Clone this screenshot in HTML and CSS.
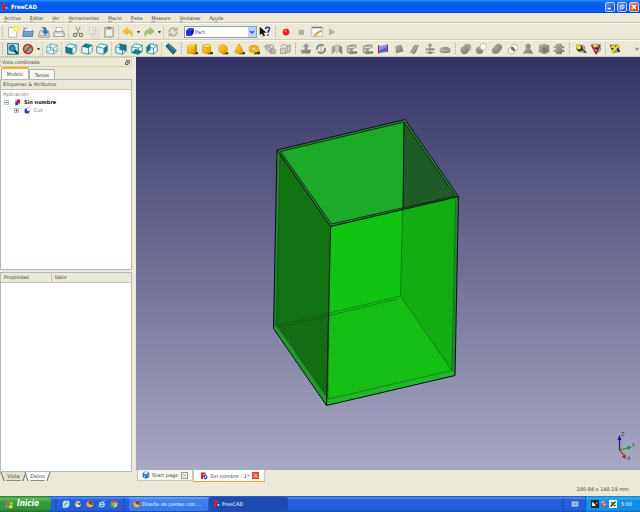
FILE: index.html
```html
<!DOCTYPE html>
<html lang="es">
<head>
<meta charset="utf-8">
<title>FreeCAD</title>
<link rel="stylesheet" href="styles.css">
</head>
<body>
<svg class="defs" aria-hidden="true">
  <defs>
    <linearGradient id="gold" x1="0" x2="1" y1="0" y2="1"><stop offset="0" stop-color="#ffdc30"/><stop offset="1" stop-color="#e89000"/></linearGradient>
    <linearGradient id="steel" x1="0" x2="1" y1="0" y2="1"><stop offset="0" stop-color="#b4b4aa"/><stop offset="1" stop-color="#74746c"/></linearGradient>
  </defs>
  <symbol id="freecad" viewBox="0 0 16 16"><path fill="#d8201c" d="M2 1h9v4H6v2h3v3H6v4H2z"/><path fill="#2848b0" d="M10 5l2 1 2 1 1 3-1 3-3 2-3-2-1-3 1-3z"/><circle cx="11" cy="10" r="1.8" fill="#cfe0ff"/></symbol>
  <symbol id="new" viewBox="0 0 16 16"><path fill="#fafafa" stroke="#aaa9a2" d="M2 2h11v13H2z"/><circle cx="12" cy="4" r="4" fill="#fbe94a"/><circle cx="12" cy="4" r="2" fill="#fffbc0"/></symbol>
  <symbol id="open" viewBox="0 0 16 16"><path fill="#a9a9a3" d="M2 2h5l1 2h6v9H1z"/><path fill="#fff" d="M4 4h9v4H4z"/><path fill="#6d9fd2" stroke="#3e70a8" d="M2 7h13l-1 7H1z"/></symbol>
  <symbol id="save" viewBox="0 0 16 16"><path fill="#d9d9d6" stroke="#8b8b88" d="M3 6h10l2 5v4H1v-4z"/><path fill="#3874bc" d="M4 2c5-2 8 0 8 5h3l-5 5-5-5h3c0-3-1-4-4-5z"/><path fill="#999" d="M3 12h10v1H3z"/></symbol>
  <symbol id="print" viewBox="0 0 16 16"><path fill="#fff" stroke="#aaa" d="M4 2h8v6H4z"/><path fill="#cfcfcc" stroke="#8e8e8a" d="M2 7h12l1 3v4H1v-4z"/><path fill="#fff" d="M3 11h10v2H3z"/></symbol>
  <symbol id="cut" viewBox="0 0 16 16"><path fill="none" stroke="#a5a49b" stroke-width="1.6" d="M5 1l5 10M11 1L6 11"/><circle cx="4" cy="12" r="2.3" fill="none" stroke="#7d7c75" stroke-width="1.6"/><circle cx="12" cy="12" r="2.3" fill="none" stroke="#7d7c75" stroke-width="1.6"/></symbol>
  <symbol id="copy" viewBox="0 0 16 16"><path fill="#f0efe6" stroke="#cbc9bc" d="M2 2h8v9H2zM6 5h8v10H6z"/><path stroke="#d6d4c8" d="M8 8h4M8 10h4M8 12h4"/></symbol>
  <symbol id="paste" viewBox="0 0 16 16"><path fill="#c9c7ba" stroke="#a3a196" d="M2 2h12v13H2z"/><path fill="#f2f1e9" d="M4 5h8v8H4z"/><path fill="#8f8d84" d="M5 1h6v3H5z"/></symbol>
  <symbol id="undo" viewBox="0 0 16 16"><path fill="#f0c41c" stroke="#d0a010" stroke-width=".6" d="M7 2v3c6 0 8 3 6 9-1-4-3-5-6-5v3L1 7z"/></symbol>
  <symbol id="redo" viewBox="0 0 16 16"><path fill="#a5c07c" stroke="#86a45e" stroke-width=".6" d="M9 2v3C3 5 1 8 3 14c1-4 3-5 6-5v3l6-5z"/></symbol>
  <symbol id="refresh" viewBox="0 0 16 16"><path fill="none" stroke="#b3b1a8" stroke-width="2.4" d="M3 8a5 5 0 0 1 9-3M13 8a5 5 0 0 1-9 3"/><path fill="#b3b1a8" d="M14 1v6H8zM2 15V9h6z"/></symbol>
  <symbol id="bluebox" viewBox="0 0 16 16"><path fill="#1a2ee0" stroke="#000048" d="M1 5l5-4h9v9l-4 5H1z"/><path fill="#2f48f0" d="M2 5l4-3h8l-3 3z"/><path fill="#0a1590" d="M11 6l3-3v7l-3 4z"/></symbol>
  <symbol id="whats" viewBox="0 0 16 16"><path fill="#111" d="M1 1v11l3-2 2 4 2-1-2-4h4z"/><path fill="none" stroke="#223082" stroke-width="2" d="M9 4c0-3 5-3 5 0 0 2-2 2-2 5"/><path fill="#223082" d="M11 11h2v2h-2z"/></symbol>
  <symbol id="record" viewBox="0 0 16 16"><circle cx="8" cy="8" r="4.500" fill="#e81c24"/><circle cx="7" cy="6.500" r="1.500" fill="#ff7a78"/></symbol>
  <symbol id="stop" viewBox="0 0 16 16"><path fill="#b2b0a6" d="M5 5h7v7H5z"/></symbol>
  <symbol id="edit" viewBox="0 0 16 16"><path fill="#fbfbf7" stroke="#b5b3a8" d="M1 2h14v12H1z"/><path fill="#707c82" d="M1 1h14v2H1z"/><path stroke="#e09428" stroke-width="2" d="M6 11l8-5"/><path stroke="#555" d="M3 12h5"/></symbol>
  <symbol id="play" viewBox="0 0 16 16"><path fill="#b9b7ac" d="M4 3l9 5-9 5z"/></symbol>
  <symbol id="fit" viewBox="0 0 16 16"><path fill="#c6eef0" stroke="#176f80" stroke-width="1.500" d="M1 1h14v14H1z"/><path stroke="#103040" stroke-width="3" d="M9 9l5 5"/><circle cx="7" cy="7" r="4" fill="#2a98aa" stroke="#0e4454"/></symbol>
  <symbol id="nodraw" viewBox="0 0 16 16"><circle cx="8" cy="8" r="6" fill="#78b4a4" stroke="#d0201c" stroke-width="2"/><path stroke="#d0201c" stroke-width="2" d="M12 4l-8 8"/></symbol>
  <symbol id="wire" viewBox="0 0 16 16"><path fill="#edf8f8" stroke="#5c9ca8" stroke-width="1" d="M1 5l5-4 9 2v8l-5 4-9-2zM1 5l9 2 5-4M10 7v8M6 1v8l-5 4M6 9l9 2"/></symbol>
  <symbol id="vfront" viewBox="0 0 16 16"><path fill="#e7f6f6" stroke="#2c7886" d="M1 5l5-4 9 2v8l-5 4-9-2z"/><path fill="#127d90" d="M1 5l9 2v8l-9-2z"/><path fill="none" stroke="#2c7886" d="M10 7l5-4"/></symbol>
  <symbol id="vtop" viewBox="0 0 16 16"><path fill="#e7f6f6" stroke="#2c7886" d="M1 5l5-4 9 2v8l-5 4-9-2zM10 7v8"/><path fill="#127d90" d="M1 5l5-4 9 2-5 4z"/></symbol>
  <symbol id="vright" viewBox="0 0 16 16"><path fill="#e7f6f6" stroke="#2c7886" d="M1 5l5-4 9 2v8l-5 4-9-2zM1 5l9 2"/><path fill="#127d90" d="M10 7l5-4v8l-5 4z"/></symbol>
  <symbol id="vrear" viewBox="0 0 16 16"><path fill="#e7f6f6" stroke="#2c7886" d="M1 5l5-4 9 2v8l-5 4-9-2z"/><path fill="#127d90" d="M6 1l9 2v8l-9-2z"/><path fill="none" stroke="#2c7886" d="M1 5l9 2v8M10 7l5-4"/></symbol>
  <symbol id="vbottom" viewBox="0 0 16 16"><path fill="#e7f6f6" stroke="#2c7886" d="M1 5l5-4 9 2v8l-5 4-9-2z"/><path fill="#127d90" d="M1 13l5-5 9 3-5 4z"/><path fill="none" stroke="#2c7886" d="M1 5l9 2v8M10 7l5-4"/></symbol>
  <symbol id="vleft" viewBox="0 0 16 16"><path fill="#e7f6f6" stroke="#2c7886" d="M1 5l5-4 9 2v8l-5 4-9-2z"/><path fill="#127d90" d="M1 5l5-4v8l-5 4z"/><path fill="none" stroke="#2c7886" d="M1 5l9 2v8M10 7l5-4"/></symbol>
  <symbol id="ruler" viewBox="0 0 16 16"><path fill="#206f84" stroke="#0c3440" d="M1 4l4-3 10 9-4 5z"/><path stroke="#5fa5b2" d="M4 2l10 9"/></symbol>
  <symbol id="box" viewBox="0 0 16 16"><path fill="#4c3c08" d="M10 12h6v3H9z"/><path fill="url(#gold)" stroke="#a87600" stroke-width=".6" d="M2 4l2-2h10v9l-2 3H2z"/><path fill="#ffe560" d="M2 4l2-2h9l-2 2z"/><path fill="#c98500" d="M12 4l2-2v9l-2 3z"/></symbol>
  <symbol id="cylinder" viewBox="0 0 16 16"><path fill="#4c3c08" d="M10 12h6v3H9z"/><path fill="url(#gold)" stroke="#a87600" stroke-width=".6" d="M2 4v8c2 3 9 3 11 0V4z"/><ellipse cx="7.500" cy="4" rx="5.500" ry="2.300" fill="#ffe258" stroke="#a87600" stroke-width=".6"/></symbol>
  <symbol id="sphere" viewBox="0 0 16 16"><path fill="#4c3c08" d="M9 13l6-1v3H7z"/><circle cx="8" cy="8" r="6" fill="url(#gold)" stroke="#d08400" stroke-width=".6"/></symbol>
  <symbol id="cone" viewBox="0 0 16 16"><path fill="#4c3c08" d="M10 12h6v3H8z"/><path fill="url(#gold)" stroke="#b87a00" stroke-width=".6" d="M8 1L2 12c2 3 10 3 12 0z"/></symbol>
  <symbol id="torus" viewBox="0 0 16 16"><path fill="#4c3c08" d="M9 12l7-1v4H8z"/><ellipse cx="8" cy="8" rx="5" ry="3.300" fill="none" stroke="#a87600" stroke-width="4.200"/><ellipse cx="8" cy="8" rx="5" ry="3.300" fill="none" stroke="#f8b912" stroke-width="3.400"/></symbol>
  <symbol id="primitives" viewBox="0 0 16 16"><path fill="#b9b7ad" stroke="#969489" d="M1 4l4-2 5 3v6H4zM8 8h7v6H8z"/><circle cx="10" cy="5" r="3" fill="#c8c6bb" stroke="#969489"/><path stroke="#eeede5" d="M2 12L13 2"/></symbol>
  <symbol id="builder" viewBox="0 0 16 16"><path fill="#d0cec3" stroke="#969489" d="M2 7h7v7H2zM11 3h4v9h-4z"/><path fill="none" stroke="#88867d" d="M3 5c0-4 6-4 7 0M8 13h5"/></symbol>
  <symbol id="extrude" viewBox="0 0 16 16"><path fill="url(#steel)" d="M8 0l5 5h-3v4h5l-2 5H2L1 9h5V5H3z"/></symbol>
  <symbol id="revolve" viewBox="0 0 16 16"><circle cx="8" cy="8" r="5.500" fill="none" stroke="#85857d" stroke-width="2.600" stroke-dasharray="13 3"/><path stroke="#99998f" d="M8 3v10"/></symbol>
  <symbol id="mirror" viewBox="0 0 16 16"><path fill="url(#steel)" d="M1 5l5-3v9l-5 4zM15 5l-5-3v9l5 4z"/><path stroke="#99998f" d="M8 1v13"/></symbol>
  <symbol id="fillet" viewBox="0 0 16 16"><path fill="url(#steel)" d="M1 6c0-3 3-4 6-4h7v4l-5 2v3h6v3l-10 1-4-3z"/><path fill="none" stroke="#e3e2d9" stroke-width="1.500" d="M3 6h7l3-2M4 8v4"/></symbol>
  <symbol id="ruled" viewBox="0 0 16 16"><path fill="#879ae4" d="M2 4l12-2v10L2 14z"/><path fill="#4a68cf" d="M3 10l10-5v6L3 13z"/><path stroke="#d41838" stroke-width="1.500" d="M2 3v11M14 2v10"/></symbol>
  <symbol id="loft" viewBox="0 0 16 16"><path fill="url(#steel)" d="M3 4l8-2 3 9-10 3z"/></symbol>
  <symbol id="sweep" viewBox="0 0 16 16"><path fill="url(#steel)" d="M1 12c5 0 4-8 9-10l5 1c-3 2-2 9-7 12z"/><path fill="none" stroke="#cfcec5" d="M4 13c5-1 4-7 9-10"/></symbol>
  <symbol id="offset" viewBox="0 0 16 16"><path fill="url(#steel)" d="M8 0l4 4H9v3h5v3H9v2h6l-7 3-7-3h6v-2H2V7h5V4H4z"/></symbol>
  <symbol id="thick" viewBox="0 0 16 16"><path fill="url(#steel)" d="M1 8c2-4 12-4 14 0v4c-3 2-11 2-14 0z"/><path fill="none" stroke="#dddcd3" d="M2 9c3 2 9 2 12 0"/></symbol>
  <symbol id="boolean" viewBox="0 0 16 16"><circle cx="10" cy="6" r="5" fill="#a5a59c"/><circle cx="6" cy="9.500" r="5" fill="url(#steel)" stroke="#74746c" stroke-width=".6"/></symbol>
  <symbol id="cutop" viewBox="0 0 16 16"><circle cx="6" cy="9.500" r="5" fill="url(#steel)"/><circle cx="11" cy="5" r="4.500" fill="#faf9f2" stroke="#aaa99e"/></symbol>
  <symbol id="union" viewBox="0 0 16 16"><path fill="url(#steel)" d="M1 10c0-3 3-4 4-6 2-4 9-4 10 1 0 3-2 4-3 6-3 5-11 5-11-1z"/></symbol>
  <symbol id="common" viewBox="0 0 16 16"><circle cx="10" cy="6" r="4.500" fill="#faf9f2" stroke="#aaa99e"/><circle cx="6" cy="10" r="4.500" fill="#faf9f2" stroke="#aaa99e"/><ellipse cx="8" cy="8" rx="2" ry="3.500" fill="#707068" transform="rotate(-45 8 8)"/></symbol>
  <symbol id="join" viewBox="0 0 16 16"><circle cx="8" cy="4" r="3.500" fill="url(#steel)"/><path fill="url(#steel)" d="M6 6h4l5 8H1z"/></symbol>
  <symbol id="section" viewBox="0 0 16 16"><path fill="url(#steel)" d="M1 3l7-2 7 2v9l-7 3-7-3z"/><path fill="#74746c" d="M6 6h5v5H6z"/></symbol>
  <symbol id="cross" viewBox="0 0 16 16"><path fill="url(#steel)" d="M4 1h8v3h3v3h-3v2h3v3h-3v3H4v-3H1V9h3V7H1V4h3z"/></symbol>
  <symbol id="measure" viewBox="0 0 16 16"><path fill="#a7a79f" d="M1 2h10l3 3v9L4 12z"/><circle cx="6" cy="7" r="4" fill="#222"/><circle cx="5" cy="5.500" r="3" fill="#f0e314"/><path fill="none" stroke="#33332f" stroke-width="1.500" d="M9 8l6 5"/></symbol>
  <symbol id="angle" viewBox="0 0 16 16"><path fill="#9a9a92" d="M1 1h13l1 8-5 5z"/><path fill="none" stroke="#ae1622" stroke-width="2" d="M2 3l6 11 5-11"/><path fill="#f0e314" d="M4 2h5v3H5z"/><path stroke="#222" stroke-width="2" d="M6 7h5"/></symbol>
  <symbol id="caliper" viewBox="0 0 16 16"><path fill="#96968e" d="M1 2h13v10l-9 2z"/><path stroke="#222" stroke-width="2" d="M2 3l4 8M9 4l5 8"/><path stroke="#f0e314" stroke-width="2.500" d="M3 13L14 2M2 5h6"/></symbol>
  <symbol id="globe" viewBox="0 0 16 16"><circle cx="8" cy="8" r="7" fill="#2d71b8"/><path fill="#d5ecff" d="M5 2l5-1 2 3-4 3-4-1zM3 9l4 1-1 4zM11 8l3-1-2 5z"/></symbol>
  <symbol id="close" viewBox="0 0 16 16"><path fill="none" stroke="currentColor" stroke-width="2.500" d="M4 4l8 8M12 4l-8 8"/></symbol>
  <symbol id="firefox" viewBox="0 0 16 16"><circle cx="8" cy="8" r="7" fill="#ea6a10"/><circle cx="9" cy="6" r="4" fill="#2d55a8"/><path fill="#ffb62a" d="M2 4c1 3 3 2 5 4s4 3 7 1c-1 5-7 7-11 3C1 9 1 6 2 4z"/></symbol>
  <symbol id="ie" viewBox="0 0 16 16"><circle cx="8" cy="9" r="4.500" fill="none" stroke="#9fdcff" stroke-width="2.500"/><path stroke="#9fdcff" stroke-width="2" d="M4 9h9"/><path fill="none" stroke="#f1c02c" stroke-width="1.500" d="M2 14C-1 9 11-1 15 2"/></symbol>
  <symbol id="chrome" viewBox="0 0 16 16"><circle cx="8" cy="8" r="7" fill="#f1c52c"/><path fill="#df3c2c" d="M8 8L2 4c3-5 10-4 12 1z"/><path fill="#34a048" d="M8 8L2 4c-3 5 0 10 5 11z"/><circle cx="8" cy="8" r="3" fill="#3b7ae0" stroke="#fff"/></symbol>
  <symbol id="desktop" viewBox="0 0 16 16"><path fill="#b7ddf8" stroke="#e8f6ff" d="M4 2h10v10l-4 3H2V5z"/><path stroke="#3372bb" stroke-width="2" d="M5 10l6-5"/></symbol>
  <symbol id="media" viewBox="0 0 16 16"><circle cx="8" cy="8" r="6" fill="#d6d0c4"/><path fill="#da6b25" d="M2 3l6 2-3 4z"/><path fill="#334d79" d="M8 7l6-3-2 8z"/><path stroke="#fff" stroke-width="2" d="M5 14l7-3"/></symbol>
  <symbol id="windows" viewBox="0 0 16 16"><path fill="#f05a28" d="M2 3c2-2 4-1 6 0L7 8C5 7 3 7 1 8z"/><path fill="#8bd42f" d="M9 3c2 1 4 1 6 0l-1 5c-2 1-4 1-6 0z"/><path fill="#4aa0f4" d="M1 9c2-1 4-1 6 0l-1 5c-2-1-4-1-6 0z"/><path fill="#ffd42a" d="M8 9c2 1 4 1 6 0l-1 5c-2 1-4 1-6 0z"/></symbol>
  <symbol id="cutfeature" viewBox="0 0 16 16"><circle cx="7" cy="9" r="6" fill="#1c46c0"/><circle cx="11" cy="5" r="4.500" fill="#fff" stroke="#7d9fdf"/></symbol>
  <symbol id="doc" viewBox="0 0 16 16"><path fill="#d5d5ec" d="M2 1h11v14H2z"/><path fill="#d8201c" d="M7 1h7v9H5z"/><path fill="#2647bd" d="M3 6h6v8H3z"/></symbol>
</svg>

<header class="titlebar">
  <svg class="icon-sm"><use href="#freecad"/></svg>
  <h1>FreeCAD</h1>
  <div class="winbtns">
    <button class="winbtn" aria-label="Minimizar"><svg viewBox="0 0 10 10"><path fill="#fff" d="M2 6h4v2H2z"/></svg></button>
    <button class="winbtn" aria-label="Restaurar"><svg viewBox="0 0 10 10"><path fill="none" stroke="#fff" d="M3.500 4V2.500h4v4H6M2.500 4.500h3v3h-3z"/></svg></button>
    <button class="winbtn winbtn-close" aria-label="Cerrar"><svg viewBox="0 0 10 10"><path stroke="#fff" stroke-width="1.500" d="M2.500 2.500l5 5M7.500 2.500l-5 5"/></svg></button>
  </div>
</header>

<nav class="menubar">
  <button><u>A</u>rchivo</button><button><u>E</u>ditar</button><button><u>V</u>er</button><button><u>H</u>erramientas</button><button><u>M</u>acro</button><button><u>P</u>ieza</button><button><u>M</u>easure</button><button><u>V</u>entanas</button><button>Ay<u>u</u>da</button>
</nav>

<div class="toolbar">
  <span class="grip"></span>
  <div class="group g4">
    <button aria-label="Nuevo"><svg><use href="#new"/></svg></button><button aria-label="Abrir"><svg><use href="#open"/></svg></button><button aria-label="Guardar"><svg><use href="#save"/></svg></button><button aria-label="Imprimir"><svg><use href="#print"/></svg></button>
  </div>
  <span class="sep"></span>
  <div class="group g3">
    <button aria-label="Cortar"><svg><use href="#cut"/></svg></button><button aria-label="Copiar"><svg><use href="#copy"/></svg></button><button aria-label="Pegar"><svg><use href="#paste"/></svg></button>
  </div>
  <span class="sep"></span>
  <div class="group g1"><button aria-label="Deshacer"><svg><use href="#undo"/></svg></button></div><span class="drop"></span>
  <div class="group g1"><button aria-label="Rehacer"><svg><use href="#redo"/></svg></button></div><span class="drop"></span>
  <span class="sep"></span>
  <div class="group g1"><button aria-label="Refrescar"><svg><use href="#refresh"/></svg></button></div>
  <div class="combo">
    <svg class="combo-icon"><use href="#bluebox"/></svg>
    <select aria-label="Banco de trabajo"><option>Part</option></select>
    <svg class="combo-arrow" viewBox="0 0 8 10"><path fill="none" stroke="#3a5590" stroke-width="1.500" d="M2 4l2 2 2-2"/></svg>
  </div>
  <div class="group g1"><button aria-label="¿Qué es esto?"><svg><use href="#whats"/></svg></button></div>
  <span class="grip"></span>
  <div class="group g4">
    <button aria-label="Grabar macro"><svg><use href="#record"/></svg></button><button aria-label="Detener macro"><svg><use href="#stop"/></svg></button><button aria-label="Macros"><svg><use href="#edit"/></svg></button><button aria-label="Ejecutar macro"><svg><use href="#play"/></svg></button>
  </div>
</div>

<div class="toolbar">
  <span class="grip"></span>
  <div class="group g2"><button aria-label="Ajustar todo"><svg><use href="#fit"/></svg></button><button aria-label="Estilo de dibujo"><svg><use href="#nodraw"/></svg></button></div><span class="drop"></span>
  <span class="sep"></span>
  <div class="group g1"><button aria-label="Axonométrica"><svg><use href="#wire"/></svg></button></div>
  <span class="sep"></span>
  <div class="group g3"><button aria-label="Alzado"><svg><use href="#vfront"/></svg></button><button aria-label="Planta"><svg><use href="#vtop"/></svg></button><button aria-label="Derecha"><svg><use href="#vright"/></svg></button></div>
  <span class="sep"></span>
  <div class="group g3"><button aria-label="Posterior"><svg><use href="#vrear"/></svg></button><button aria-label="Inferior"><svg><use href="#vbottom"/></svg></button><button aria-label="Izquierda"><svg><use href="#vleft"/></svg></button></div>
  <span class="sep"></span>
  <div class="group g1"><button aria-label="Medir distancia"><svg><use href="#ruler"/></svg></button></div>
  <span class="grip"></span>
  <div class="group g7">
    <button aria-label="Cubo"><svg><use href="#box"/></svg></button><button aria-label="Cilindro"><svg><use href="#cylinder"/></svg></button><button aria-label="Esfera"><svg><use href="#sphere"/></svg></button><button aria-label="Cono"><svg><use href="#cone"/></svg></button><button aria-label="Toro"><svg><use href="#torus"/></svg></button><button aria-label="Primitivas"><svg><use href="#primitives"/></svg></button><button aria-label="Constructor de formas"><svg><use href="#builder"/></svg></button>
  </div>
  <span class="grip"></span>
  <div class="group g10">
    <button aria-label="Extruir"><svg><use href="#extrude"/></svg></button><button aria-label="Revolución"><svg><use href="#revolve"/></svg></button><button aria-label="Simetría"><svg><use href="#mirror"/></svg></button><button aria-label="Redondeo"><svg><use href="#fillet"/></svg></button><button aria-label="Chaflán"><svg><use href="#fillet"/></svg></button><button aria-label="Superficie reglada"><svg><use href="#ruled"/></svg></button><button aria-label="Puente"><svg><use href="#loft"/></svg></button><button aria-label="Barrido"><svg><use href="#sweep"/></svg></button><button aria-label="Desfase"><svg><use href="#offset"/></svg></button><button aria-label="Espesor"><svg><use href="#thick"/></svg></button>
  </div>
  <span class="grip"></span>
  <div class="group g7">
    <button aria-label="Operación booleana"><svg><use href="#boolean"/></svg></button><button aria-label="Corte"><svg><use href="#cutop"/></svg></button><button aria-label="Unión"><svg><use href="#union"/></svg></button><button aria-label="Intersección"><svg><use href="#common"/></svg></button><button aria-label="Juntar"><svg><use href="#join"/></svg></button><button aria-label="Sección"><svg><use href="#section"/></svg></button><button aria-label="Secciones transversales"><svg><use href="#cross"/></svg></button>
  </div>
  <span class="grip"></span>
  <div class="group g2 measures"><button aria-label="Medida lineal"><svg><use href="#measure"/></svg></button><button aria-label="Medida angular"><svg><use href="#angle"/></svg></button></div>
  <span class="sep"></span>
  <div class="group g1"><button aria-label="Borrar medidas"><svg><use href="#caliper"/></svg></button></div>
  <button class="more" aria-label="Más">»</button>
</div>

<main class="workspace">
  <aside class="dock">
    <div class="dock-title"><span>Vista combinada</span>
      <button aria-label="Flotar"><svg viewBox="0 0 10 10"><path fill="none" stroke="#333" stroke-width="1.500" d="M3 3V1h6v5H7M1 4h5v5H1z"/></svg></button></div>
    <div class="dock-tabs"><button class="dock-tab active">Modelo</button><button class="dock-tab">Tareas</button></div>
    <section class="tree">
      <div class="head">Etiquetas &amp; Atributos</div>
      <ul>
        <li class="muted">Aplicación</li>
        <li class="level1"><svg class="expander" viewBox="0 0 6 6"><path fill="#fff" stroke="#9ab0c8" d="M.5.5h5v5h-5z"/><path stroke="#556" d="M1.500 3h3"/></svg><svg class="icon-tree"><use href="#doc"/></svg><b>Sin nombre</b></li>
        <li class="level2 muted"><svg class="expander" viewBox="0 0 6 6"><path fill="#fff" stroke="#9ab0c8" d="M.5.5h5v5h-5z"/><path stroke="#556" d="M1.500 3h3M3 1.500v3"/></svg><svg class="icon-tree"><use href="#cutfeature"/></svg>Cut</li>
      </ul>
    </section>
    <section class="props">
      <table><thead><tr><th class="prop-name">Propiedad</th><th>Valor</th></tr></thead></table>
    </section>
    <div class="bottom-tabs"><button class="dim">Vista</button><button>Datos</button></div>
  </aside>

  <section class="center">
    <div class="view3d">
      <svg class="model" viewBox="136 57 504 413" role="img" aria-label="Caja verde">
        <path fill="#28823a" d="M277 150L405 119.500L458.500 196.500L455 375.500L326.500 405.500L273.500 328.500z"/>
        <path fill="#1eaa29" d="M280.500 151L404 122L403 208.500L331.500 224.500z"/>
        <path fill="#1e5b27" d="M404 122L455.500 196.500L403 208.500z"/>
        <path fill="#117211" d="M280 153L329.500 226L327.500 400L276 326z"/>
        <path fill="#12c412" d="M331 227L402.500 210L400.500 296L329.500 313z"/>
        <path fill="#12ad12" d="M402.500 210L455.500 198L452 371L400.500 296z"/>
        <path fill="#14be14" d="M400.500 296L452 371L328.500 399L329.500 313z"/>
        <path fill="#136d13" d="M277.500 326L329 313.500L328 398z"/>
        <path fill="#24b52f" d="M328 399L452.500 370.500L455 375.500L326.500 405.500z"/>
        <path fill="#259532" d="M273.500 328.500L277 326L328 399L326.500 405.500z"/>
        <g fill="none" stroke="#0a4a12" stroke-opacity=".65" stroke-width=".7">
          <path d="M402.500 209L400.500 296L452 370.500M400.500 296L277 325.500M398 299L276.500 328M452 370.500L328.500 399M277 325.500L328.500 399M280 153L276 326M455.500 199L452 370"/>
        </g>
        <g fill="none" stroke="#071507" stroke-width="1">
          <path d="M277 150L405 119.500L458.500 196.500L330.500 226.500zM277 150L273.500 328.500L326.500 405.500L455 375.500L458.500 196.500M330.500 226.500L326.500 405.500M404 122L403 208.500"/>
          <path stroke-width=".8" d="M280.500 151.500L404 122L455.500 196L331.500 224z"/>
        </g>
        <g fill="none" stroke-width="1.200">
          <path stroke="#16169c" d="M619.500 450V438"/><path fill="#16169c" d="M619.500 435l2 5h-4z"/>
          <path stroke="#169a20" d="M619.500 450l9-2"/><path fill="#169a20" d="M632 447l-5-1 1 4z"/>
          <path stroke="#b01c20" d="M619.500 450l4 5"/><path fill="#b01c20" d="M626 459l-1-5-3 3z"/>
        </g>
        <g class="axis"><text x="621" y="436">Z</text><text x="632" y="447">Y</text><text x="627" y="460">X</text></g>
      </svg>
    </div>
    <div class="doc-tabs">
      <div class="doc-tab"><svg class="icon-sm"><use href="#globe"/></svg><span>Start page</span><button class="tab-close" aria-label="Cerrar Start page"><svg><use href="#close"/></svg></button></div>
      <div class="doc-tab current"><svg class="icon-sm"><use href="#freecad"/></svg><span>Sin nombre : 1*</span><button class="tab-close red" aria-label="Cerrar Sin nombre"><svg><use href="#close"/></svg></button></div>
    </div>
  </section>
</main>

<div class="statusbar">180.84 x 148.19 mm</div>

<footer class="taskbar">
  <button class="start"><svg><use href="#windows"/></svg>Inicio</button>
  <span class="task-grip"></span>
  <div class="quick">
    <button aria-label="Escritorio"><svg><use href="#desktop"/></svg></button><button aria-label="Multimedia"><svg><use href="#media"/></svg></button><button aria-label="Firefox"><svg><use href="#firefox"/></svg></button><button aria-label="Internet Explorer"><svg><use href="#ie"/></svg></button><button aria-label="Chrome"><svg><use href="#chrome"/></svg></button>
  </div>
  <span class="task-grip"></span>
  <button class="task"><svg><use href="#firefox"/></svg>Diseño de piezas con ...</button>
  <button class="task pressed"><svg><use href="#freecad"/></svg>FreeCAD</button>
  <div class="lang"><span class="task-grip"></span><svg viewBox="0 0 10 10"><path fill="#d5e6ff" d="M1 2h8v6H1z"/><path stroke="#2f65bd" d="M2 4h6M2 6h6"/></svg></div>
  <div class="tray">
    <svg viewBox="0 0 16 16"><path fill="#18243c" d="M0 0h16v16H0z"/><path fill="#e6edf5" d="M2 4l5 3 3 5H2zM10 5h3v2h-3z"/></svg>
    <svg viewBox="0 0 16 16"><path fill="#b4b4b4" d="M2 3l7-2 5 8-4 5-6-3z"/><circle cx="9" cy="9" r="4" fill="none" stroke="#c43230" stroke-width="2"/></svg>
    <svg viewBox="0 0 16 16"><path fill="#f4f4f0" d="M0 0h16v16H0z"/><path stroke="#222" stroke-width="2.500" d="M3 13L13 3M4 5l4 1M9 12l4-2"/></svg>
    <time>5:00</time>
  </div>
</footer>
</body>
</html>
```

FILE: styles.css
```css
* { box-sizing: border-box; }

html, body { height: 100%; }

body {
  margin: 0;
  display: flex;
  flex-direction: column;
  overflow: hidden;
  background: #ece9d8;
  color: #44443f;
  font-family: "DejaVu Sans", sans-serif;
  font-size: 5px;
  line-height: 8px;
}

button, select {
  margin: 0;
  padding: 0;
  border: 0;
  background: none;
  color: inherit;
  font: inherit;
}

svg { display: block; flex: none; }
.defs { position: absolute; width: 0; height: 0; }
.icon-sm { width: 8px; height: 8px; }

.titlebar, .menubar, .dock-title, .dock-tabs, .start {
  font-family: "DejaVu Sans Condensed", "DejaVu Sans", sans-serif;
}

/* Title bar */
.titlebar {
  display: flex;
  align-items: center;
  gap: 2px;
  flex: none;
  height: 13px;
  padding: 0 1px;
  background: linear-gradient(#2a8cff 0, #0a60ee 20%, #0058e8 60%, #0764f8 85%, #0038b0 100%);
  color: #fff;
}
.titlebar h1 {
  flex: 1;
  margin: 0;
  font-size: 6px;
  line-height: 12px;
}
.winbtns { display: flex; gap: 2px; }
.winbtn {
  width: 10px;
  height: 10px;
  border: 1px solid #b8d0ff;
  border-radius: 2px;
  background: linear-gradient(135deg, #5b8ff4, #1c4fd0);
}
.winbtn-close { background: linear-gradient(135deg, #f08a68, #cc3510); }
.winbtn svg { width: 8px; height: 8px; }

/* Menu */
.menubar {
  display: flex;
  gap: 9px;
  flex: none;
  height: 10px;
  padding: 1px 4px 0;
  border-bottom: 1px solid #c9c6b4;
}
.menubar button { line-height: 8px; }
.menubar u { text-decoration-thickness: 1px; text-decoration-color: #aaa89e; }

/* Toolbars */
.toolbar {
  display: flex;
  align-items: center;
  flex: none;
  height: 17px;
  border-top: 1px solid #faf9f2;
  border-bottom: 1px solid #cfccba;
}
.group { display: flex; flex: none; }
.group button { display: flex; flex: 1; justify-content: center; }
.group svg { width: 12px; height: 12px; }
.g1 { width: 16px; }
.g2 { width: 31px; }
.g3 { width: 47px; }
.g4 { width: 62px; }
.g7 { width: 109px; }
.g10 { width: 155px; }
.measures { margin-left: 1px; }
.grip {
  flex: none;
  width: 1px;
  height: 12px;
  margin: 0 2px;
  background: repeating-linear-gradient(#a5a292 0 1px, transparent 1px 2px);
}
.sep { flex: none; width: 1px; height: 14px; margin: 0 1px; background: #d3d0bf; }
.drop {
  width: 3px;
  margin: 0 1px;
  border: 1px solid transparent;
  border-top: 2px solid #444;
  border-bottom: 0;
}
.more { margin-left: auto; padding-right: 1px; font-size: 7px; }

.combo {
  position: relative;
  width: 73px;
  height: 12px;
  margin-left: 3px;
}
.combo select {
  appearance: none;
  width: 100%;
  height: 12px;
  padding-left: 10px;
  border: 1px solid #8aa4c4;
  background: #fff;
}
.combo-icon { position: absolute; left: 2px; top: 2px; width: 8px; height: 8px; }
.combo-arrow {
  position: absolute;
  right: 1px;
  top: 1px;
  width: 8px;
  height: 10px;
  background: #bdd2fb;
  pointer-events: none;
}

/* Workspace */
.workspace { display: flex; flex: 1; min-height: 0; }
.dock {
  display: flex;
  flex-direction: column;
  flex: none;
  width: 132px;
  margin-right: 4px;
}
.dock-title {
  display: flex;
  justify-content: space-between;
  align-items: center;
  height: 10px;
  padding: 0 1px 0 1px;
  border: 1px solid #d2cfbf;
}
.dock-title svg { width: 5px; height: 5px; }
.dock-tabs { display: flex; align-items: flex-end; height: 12px; padding-left: 1px; }
.dock-tab {
  width: 26px;
  height: 10px;
  border: 1px solid #a5b4b8;
  border-bottom: 0;
  border-radius: 2px 2px 0 0;
  background: #f7f6ef;
}
.dock-tab.active {
  width: 28px;
  height: 12px;
  border-top: 2px solid #f5b020;
  background: #fcfcfa;
}
.tree, .props {
  border: 1px solid #aebcc2;
  background: #fff;
}
.tree { flex: 19; margin-bottom: 2px; }
.props { flex: 20; }
.head {
  height: 10px;
  padding-left: 2px;
  border-bottom: 1px solid #c8c5b2;
  background: #ebe9da;
}
.tree ul { margin: 0; padding: 0 0 0 2px; list-style: none; }
.tree li { display: flex; align-items: center; height: 8px; }
.level1 { padding-left: 1px; }
.level2 { padding-left: 11px; }
.tree b {
  color: #111;
  font-family: "DejaVu Sans", sans-serif;
}
.muted { color: #77776f; }
.expander { width: 5px; height: 5px; margin-right: 5px; }
.icon-tree { width: 7px; height: 7px; margin-right: 3px; }
.props table { width: 100%; border-collapse: collapse; }
.props th {
  height: 10px;
  padding: 0 0 0 3px;
  border-bottom: 1px solid #c8c5b2;
  background: #ebe9da;
  font-weight: normal;
  text-align: left;
}
.props .prop-name { width: 50px; border-right: 1px solid #c8c5b2; }
.bottom-tabs { display: flex; gap: 3px; height: 10px; padding-left: 3px; }
.bottom-tabs button {
  position: relative;
  width: 21px;
  height: 9px;
  border-bottom: 1px solid #8c8a7e;
  background: #fff;
}
.bottom-tabs button::before,
.bottom-tabs button::after {
  content: "";
  position: absolute;
  top: 0;
  width: 2px;
  height: 9px;
  background: inherit;
}
.bottom-tabs button::before { left: -1px; border-left: 1px solid #6c6a60; transform: skewX(20deg); }
.bottom-tabs button::after { right: -1px; border-right: 1px solid #6c6a60; transform: skewX(-20deg); }
.bottom-tabs .dim { background: #e4e1cf; }

.center { display: flex; flex-direction: column; flex: 1; min-width: 0; }
.view3d { flex: 1; min-height: 0; background: linear-gradient(#333366, #a9a9c4); }
.model { width: 100%; height: 100%; }
.axis { fill: #33334c; font-size: 5px; }

.doc-tabs { display: flex; flex: none; height: 12px; padding-left: 1px; }
.doc-tab {
  display: flex;
  align-items: center;
  gap: 2px;
  height: 11px;
  padding: 0 4px;
  border: 1px solid #c8c6b8;
  border-top: 0;
  background: #f8f7f0;
}
.doc-tab.current {
  height: 12px;
  padding: 0 5px 0 6px;
  border-bottom: 1px solid #f0a21c;
  background: #fff;
}
.tab-close { width: 7px; height: 7px; margin-left: 1px; border: 1px solid #9d9b88; color: #8e8c7c; }
.tab-close svg { width: 5px; height: 5px; }
.tab-close.red { border-color: #d24c28; background: #e3633f; color: #fff; }

.statusbar {
  flex: none;
  height: 14px;
  padding: 3px 11px 0 0;
  text-align: right;
}

/* Taskbar */
.taskbar {
  display: flex;
  align-items: stretch;
  flex: none;
  height: 16px;
  background: linear-gradient(#1c48b8 0, #4a8cf4 10%, #2560dc 25%, #245ddb 85%, #1b48b4 100%);
  color: #fff;
}
.taskbar svg { width: 8px; height: 8px; }
.start {
  display: flex;
  align-items: center;
  gap: 3px;
  width: 51px;
  padding-left: 5px;
  border-radius: 0 5px 5px 0;
  background: linear-gradient(#2d7a2d 0, #5cb85c 15%, #389a38 40%, #34923a 80%, #22702a 100%);
  font-size: 8px;
  font-style: italic;
  font-weight: bold;
}
.start svg { width: 9px; height: 9px; }
.task-grip {
  width: 2px;
  margin: 3px 4px 2px;
  background: repeating-linear-gradient(#173c96 0 1px, transparent 1px 3px);
}
.quick { display: flex; align-items: center; gap: 4px; padding: 0 1px; }
.task {
  display: flex;
  align-items: center;
  gap: 1px;
  width: 79px;
  margin: 1px 1px 1px 0;
  padding-left: 4px;
  border-radius: 2px;
  background: linear-gradient(#6ba4fa, #3c80f0 25%, #3778e8);
}
.task.pressed { background: #1c4cae; }
.lang { display: flex; align-items: center; gap: 3px; margin-left: auto; padding-right: 6px; }
.lang .task-grip { align-self: stretch; }
.tray {
  display: flex;
  align-items: center;
  gap: 1px;
  width: 55px;
  padding-left: 5px;
  border-left: 1px solid #1257b8;
  background: linear-gradient(#1770d0 0, #30b0f4 12%, #148de4 30%, #1290e8 85%, #0d6cc0 100%);
}
.tray time { margin-left: 3px; }
```
